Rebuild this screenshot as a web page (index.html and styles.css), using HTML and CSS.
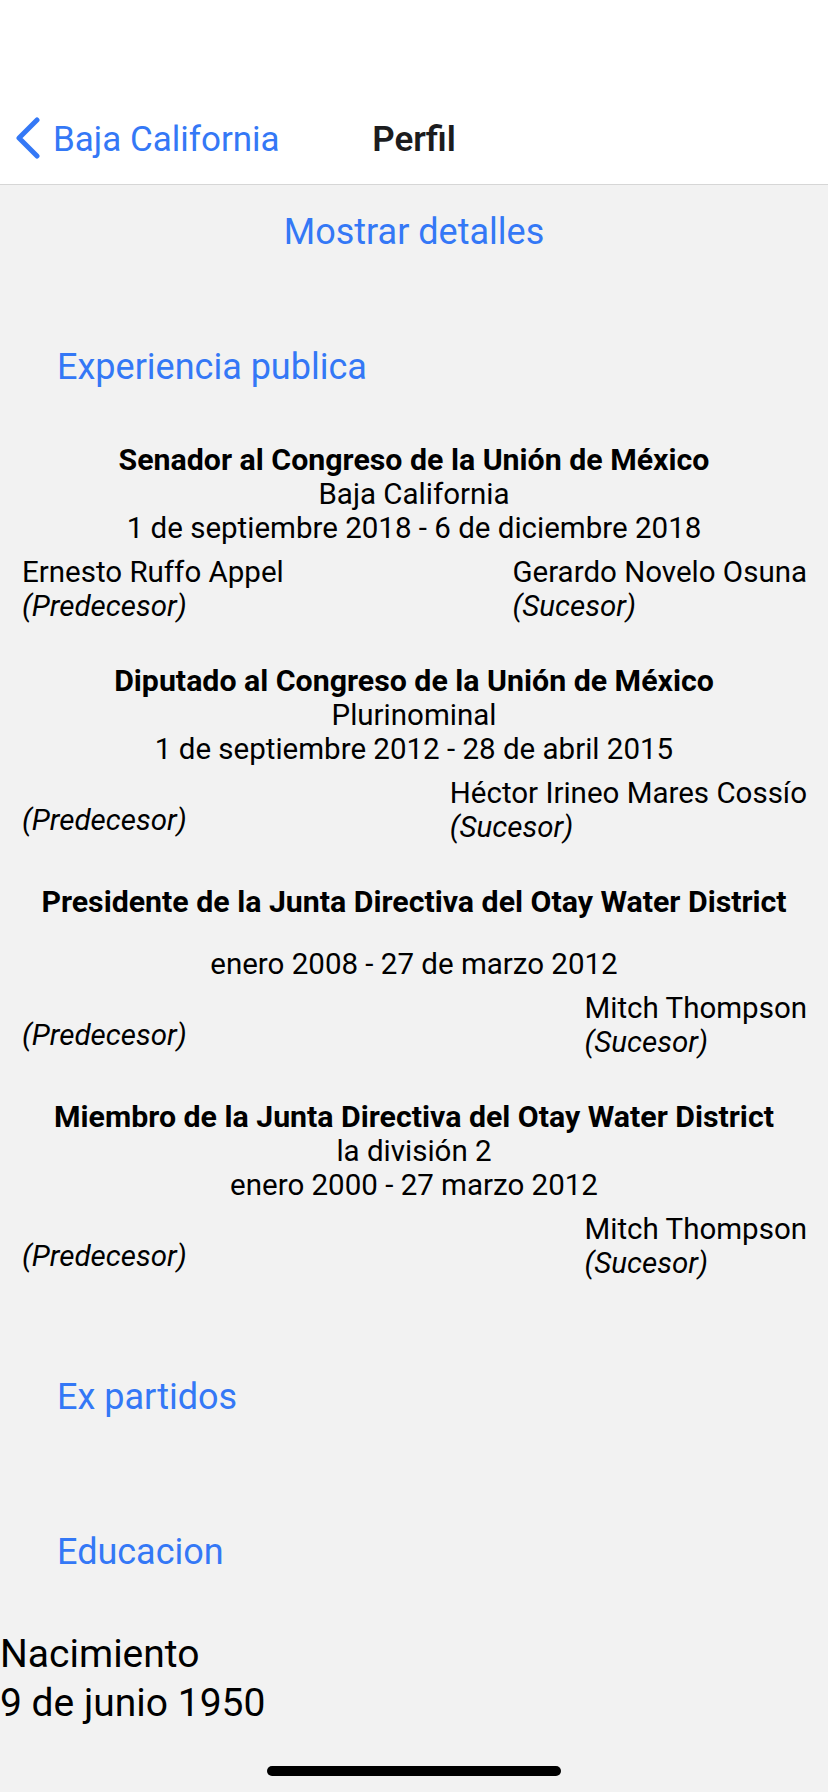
FILE: index.html
```html
<!DOCTYPE html>
<html lang="es">
<head>
<meta charset="utf-8">
<title>Perfil</title>
<link rel="stylesheet" href="styles.css">
</head>
<body>
<div class="screen">
  <header class="topbar">
    <div class="statusbar"></div>
    <nav class="navbar">
      <a class="back">
        <svg class="chev" width="28" height="42" viewBox="0 0 28 42"><polyline points="23,3 5,21 23,39" fill="none" stroke="#3478f6" stroke-width="5" stroke-linecap="round" stroke-linejoin="round"/></svg>
        <span>Baja California</span>
      </a>
      <div class="title">Perfil</div>
    </nav>
  </header>

  <main class="content">
    <div class="details">Mostrar detalles</div>

    <h2 class="section first">Experiencia publica</h2>

    <section class="post">
      <div class="post-title">Senador al Congreso de la Unión de México</div>
      <div class="post-line">Baja California</div>
      <div class="post-line">1 de septiembre 2018 - 6 de diciembre 2018</div>
      <div class="succession">
        <div class="col">
          <div class="name">Ernesto Ruffo Appel</div>
          <div class="role">(Predecesor)</div>
        </div>
        <div class="col right">
          <div class="name">Gerardo Novelo Osuna</div>
          <div class="role">(Sucesor)</div>
        </div>
      </div>
    </section>

    <section class="post">
      <div class="post-title">Diputado al Congreso de la Unión de México</div>
      <div class="post-line">Plurinominal</div>
      <div class="post-line">1 de septiembre 2012 - 28 de abril 2015</div>
      <div class="succession">
        <div class="col">
          <div class="name empty"></div>
          <div class="role">(Predecesor)</div>
        </div>
        <div class="col right">
          <div class="name">Héctor Irineo Mares Cossío</div>
          <div class="role">(Sucesor)</div>
        </div>
      </div>
    </section>

    <section class="post">
      <div class="post-title">Presidente de la Junta Directiva del Otay Water District</div>
      <div class="post-line empty"></div>
      <div class="post-line">enero 2008 - 27 de marzo 2012</div>
      <div class="succession">
        <div class="col">
          <div class="name empty"></div>
          <div class="role">(Predecesor)</div>
        </div>
        <div class="col right">
          <div class="name">Mitch Thompson</div>
          <div class="role">(Sucesor)</div>
        </div>
      </div>
    </section>

    <section class="post">
      <div class="post-title">Miembro de la Junta Directiva del Otay Water District</div>
      <div class="post-line">la división 2</div>
      <div class="post-line">enero 2000 - 27 marzo 2012</div>
      <div class="succession">
        <div class="col">
          <div class="name empty"></div>
          <div class="role">(Predecesor)</div>
        </div>
        <div class="col right">
          <div class="name">Mitch Thompson</div>
          <div class="role">(Sucesor)</div>
        </div>
      </div>
    </section>

    <h2 class="section parties">Ex partidos</h2>
    <h2 class="section education">Educacion</h2>

    <div class="birth">
      <div>Nacimiento</div>
      <div>9 de junio 1950</div>
    </div>
  </main>
  <div class="home-indicator"></div>
</div>
</body>
</html>
```

FILE: styles.css
```css
* { box-sizing: border-box; }
html, body { margin: 0; padding: 0; }
body {
  font-family: Roboto, "Liberation Sans", sans-serif;
  background: #f2f2f2;
  color: #000;
}
.screen {
  position: relative;
  width: 828px;
  min-height: 1792px;
  background: #f2f2f2;
}
.topbar { background: #fff; border-bottom: 1px solid #d6d6d6; }
.statusbar { height: 88px; }
.navbar {
  position: relative;
  height: 96px;
  display: flex;
  align-items: center;
  padding-top: 6px;
}
.back {
  display: flex;
  align-items: center;
  gap: 11px;
  padding-left: 14px;
  color: #3478f6;
  font-size: 35px;
}
.chev { display: block; margin-top: -2px; }
.title {
  position: absolute;
  left: 0; right: 0;
  top: 6px; bottom: 0;
  display: flex;
  align-items: center;
  justify-content: center;
  font-size: 35px;
  font-weight: 600;
  color: #1c1c1e;
  pointer-events: none;
}
.content { padding: 0; }
.details {
  margin-top: 27px;
  text-align: center;
  color: #3478f6;
  font-size: 36px;
  line-height: 40px;
}
.section {
  margin: 0;
  padding-left: 57px;
  color: #3478f6;
  font-size: 36px;
  font-weight: 400;
  line-height: 40px;
}
.section.first { margin-top: 95px; margin-bottom: 56px; }
.section.parties { margin-top: 97px; }
.section.education { margin-top: 115px; }

.post { font-size: 29.5px; line-height: 34px; margin-bottom: 41px; }
.post-title { text-align: center; font-weight: 700; font-size: 30.3px; }
.post-line { text-align: center; }
.post-line.empty { height: 28px; }
.succession {
  display: flex;
  justify-content: space-between;
  padding: 0 21px 0 22px;
  margin-top: 10px;
}
.col { display: flex; flex-direction: column; }
.name.empty { height: 27px; }
.role { font-style: italic; }

.birth {
  margin-top: 58px;
  font-size: 39px;
  line-height: 49px;
}
.home-indicator {
  position: absolute;
  left: 267px;
  top: 1766px;
  width: 294px;
  height: 10px;
  border-radius: 5px;
  background: #000;
}
```
